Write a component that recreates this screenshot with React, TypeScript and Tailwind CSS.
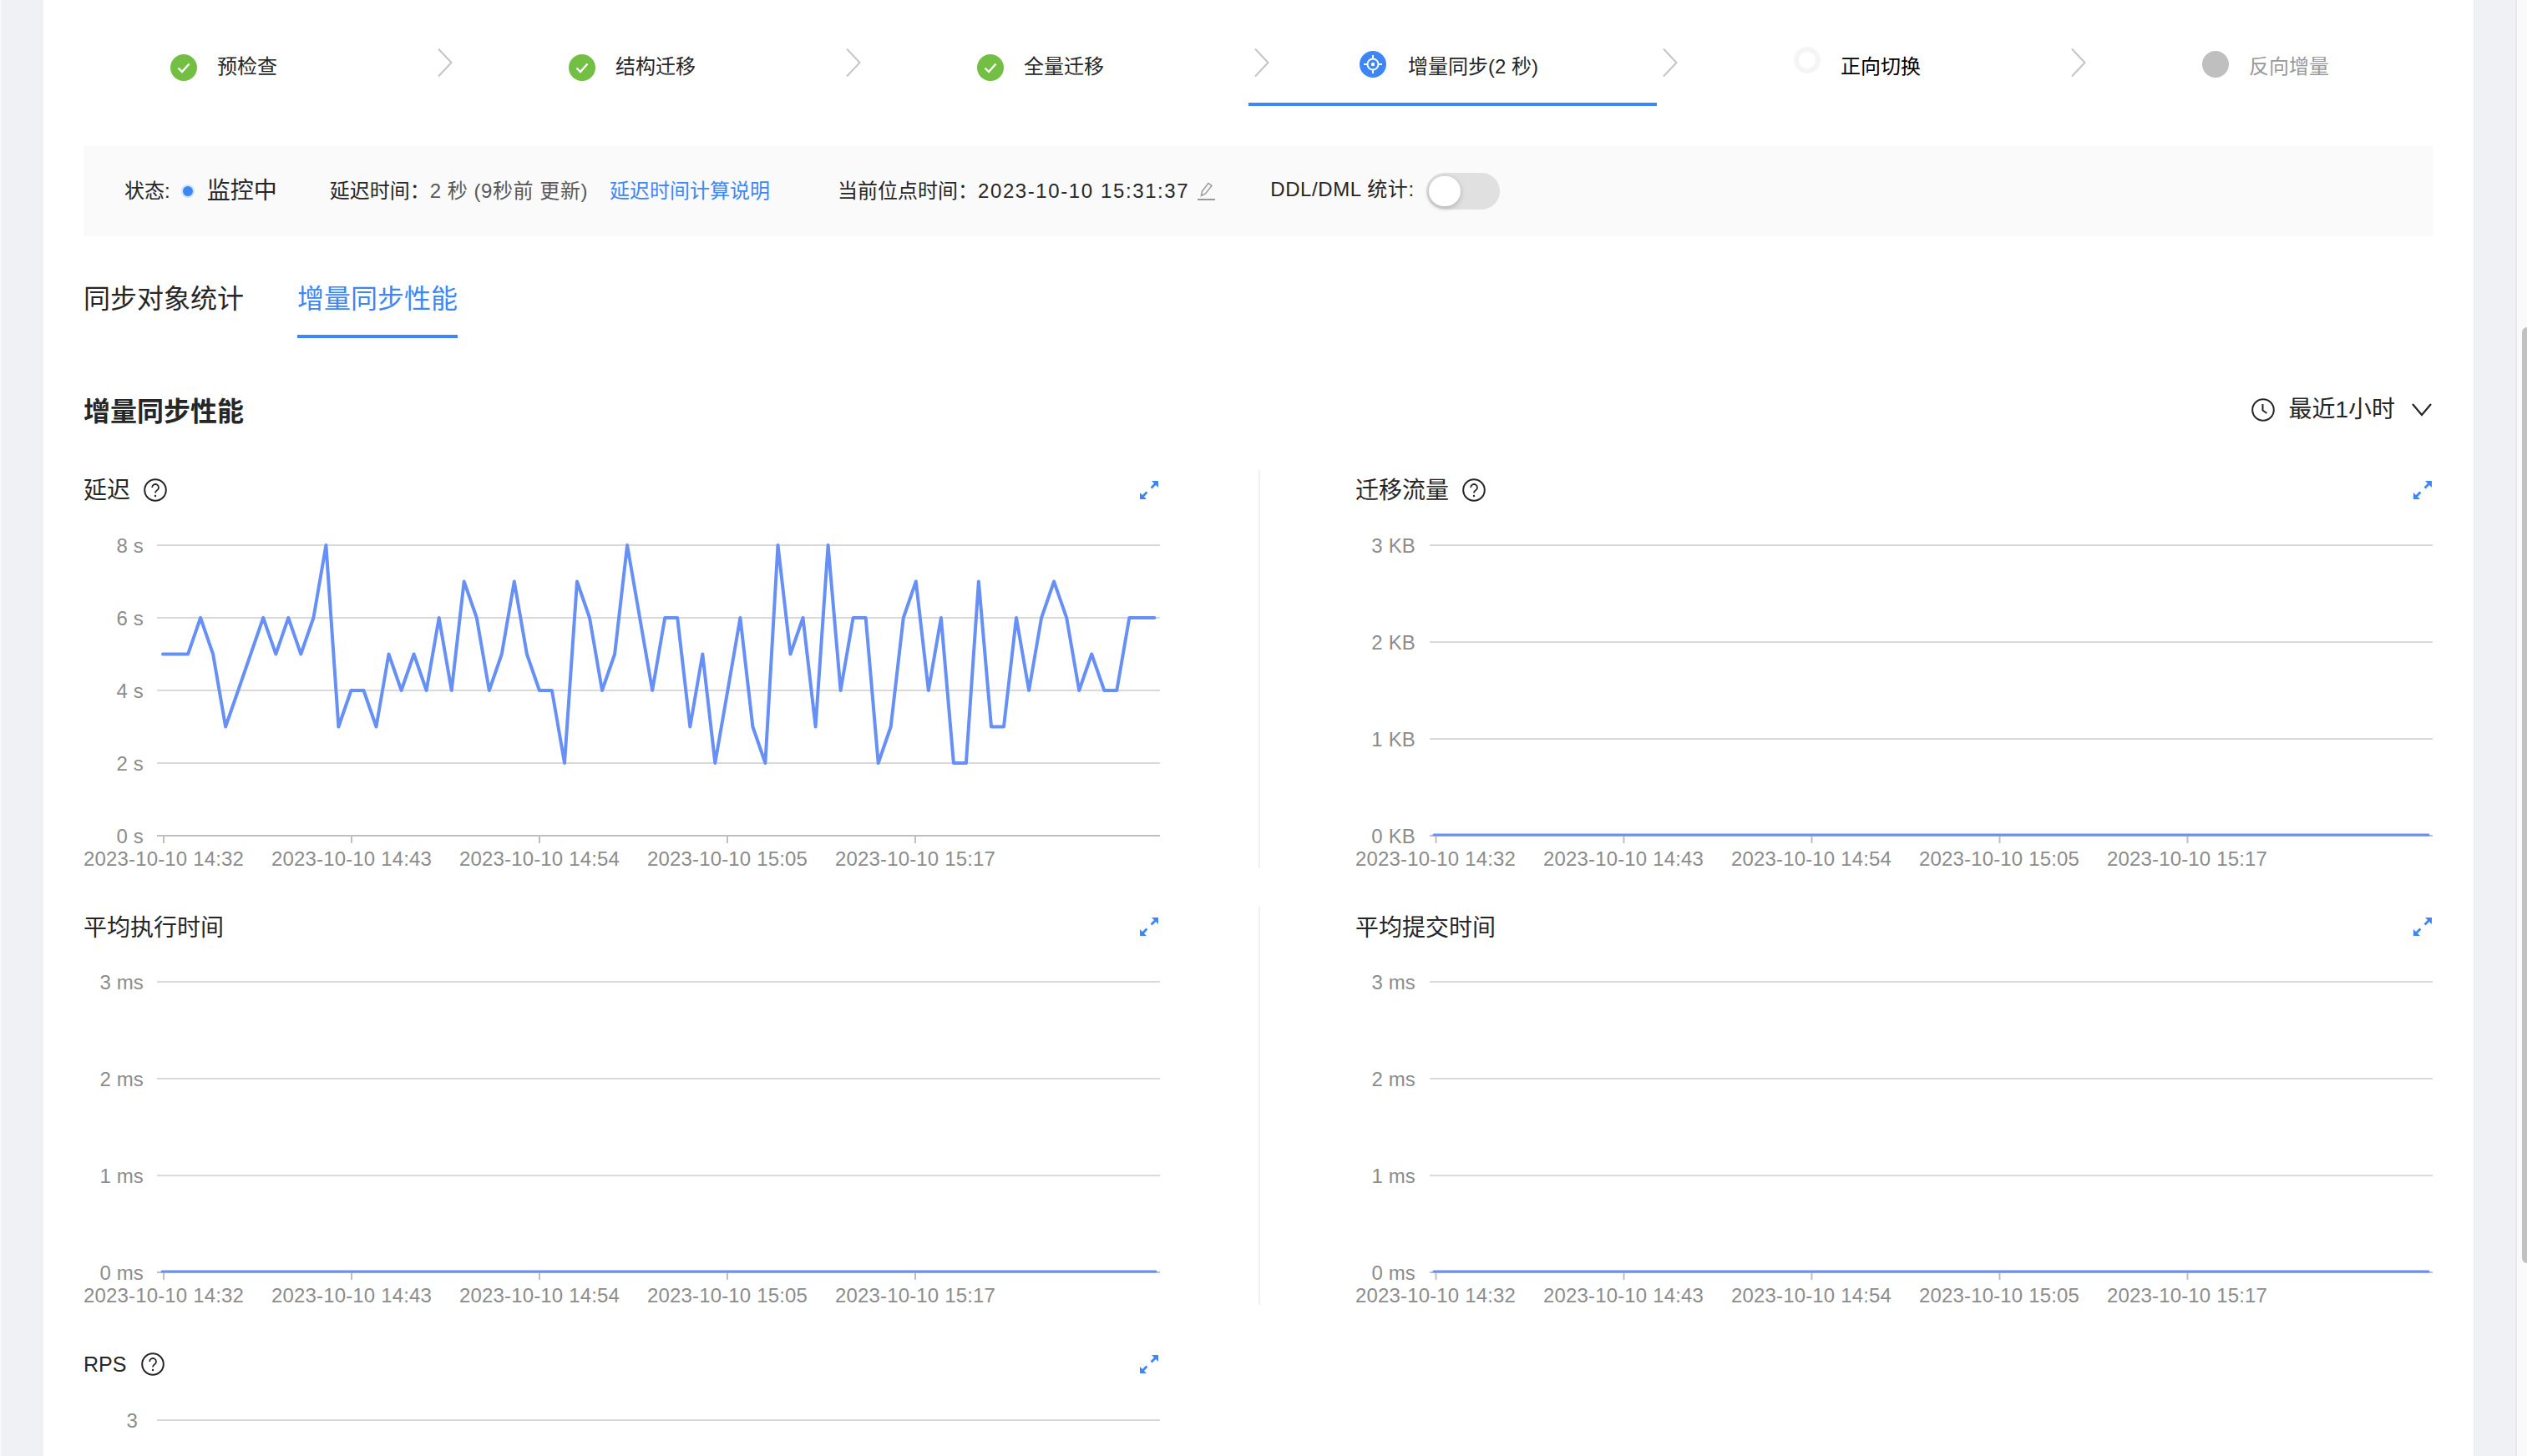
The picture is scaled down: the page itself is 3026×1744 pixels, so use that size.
import React from "react";

const BLUE = "#3d87f5";
const DATA = [5,5,5,6,5,3,4,5,6,5,6,5,6,8,3,4,4,3,5,4,5,4,6,4,7,6,4,5,7,5,4,4,2,7,6,4,5,8,6,4,6,6,3,5,2,4,6,3,2,8,5,6,3,8,4,6,6,2,3,6,7,4,6,2,2,7,3,3,6,4,6,7,6,4,5,4,4,6,6,6];
const TIMES = ["2023-10-10 14:32","2023-10-10 14:43","2023-10-10 14:54","2023-10-10 15:05","2023-10-10 15:17"];

function CheckIcon() {
  return (
    <svg width="32" height="32" viewBox="0 0 32 32" className="mt-[65px] shrink-0">
      <circle cx="16" cy="16" r="16" fill="#72bf44" />
      <path d="M9.5 16.5l4.5 4.5 8.5-9.5" fill="none" stroke="#fff" strokeWidth="2.4" />
    </svg>
  );
}

function TargetIcon() {
  return (
    <svg width="32" height="32" viewBox="0 0 32 32" className="mt-[61px] shrink-0">
      <circle cx="16" cy="16" r="16" fill={BLUE} />
      <circle cx="16" cy="16" r="6.5" fill="none" stroke="#fff" strokeWidth="2" />
      <circle cx="16" cy="16" r="2.2" fill="#fff" />
      <path d="M16 5v5M16 22v5M5 16h5M22 16h5" stroke="#fff" strokeWidth="2" />
    </svg>
  );
}

function Chevron() {
  return (
    <svg width="18" height="34" viewBox="0 0 18 34" className="absolute left-full top-[58px] ml-[7px]">
      <path d="M1 0.5L16.5 17 1 33.5" fill="none" stroke="#c4c4c4" strokeWidth="2" />
    </svg>
  );
}

function HelpIcon() {
  return (
    <svg width="28" height="28" viewBox="0 0 28 28" className="shrink-0">
      <circle cx="14" cy="14" r="12.8" fill="none" stroke="#262626" strokeWidth="2" />
      <path d="M10.2 11a3.9 3.9 0 1 1 5.9 3.3c-1.3.8-2.1 1.5-2.1 3.2" fill="none" stroke="#262626" strokeWidth="1.8" />
      <circle cx="14" cy="21" r="1.2" fill="#262626" />
    </svg>
  );
}

function ExpandIcon() {
  return (
    <svg width="22" height="22" viewBox="0 0 22 22">
      <path d="M22 0v8l-3-3-4.4 4.4-2-2L17 3l-3-3zM0 22v-8l3 3 4.4-4.4 2 2L5 19l3 3z" fill={BLUE} />
    </svg>
  );
}

type Step = { label: string; icon: React.ReactNode; active?: boolean; text: string };

const STEPS: Step[] = [
  { label: "预检查", icon: <CheckIcon />, text: "text-[#262626]" },
  { label: "结构迁移", icon: <CheckIcon />, text: "text-[#262626]" },
  { label: "全量迁移", icon: <CheckIcon />, text: "text-[#262626]" },
  { label: "增量同步(2 秒)", icon: <TargetIcon />, active: true, text: "text-[#262626]" },
  { label: "正向切换", icon: <div className="mt-[56px] h-[32px] w-[32px] shrink-0 rounded-full border-[6px] border-[#f5f5f5]" />, text: "text-black" },
  { label: "反向增量", icon: <div className="mt-[61px] h-[32px] w-[32px] shrink-0 rounded-full bg-[#bfbfbf]" />, text: "text-[#999999]" },
];

function Stepper() {
  return (
    <div className="ml-[-72px] flex w-[2934px]">
      {STEPS.map((s, i) => (
        <div
          key={s.label}
          className={`relative flex h-[127px] w-[489px] items-start justify-center pr-[9px] ${s.active ? "gap-[26px] border-b-4 border-[#3d87f5]" : "gap-[24px]"}`}
        >
          {s.icon}
          <span className={`mt-[62px] text-[24px] leading-[36px] ${s.text}`}>{s.label}</span>
          {i < STEPS.length - 1 && <Chevron />}
        </div>
      ))}
    </div>
  );
}

function StatusBar() {
  return (
    <div className="mt-[48px] flex h-[108px] items-center bg-[#fafafa] pl-[49px] text-[24px] text-[#262626]">
      <span>状态:</span>
      <span className="ml-[15px] h-[12px] w-[12px] rounded-full bg-[#3d87f5] ring-2 ring-[#cfe1fd]" />
      <span className="ml-[17px] text-[28px]">监控中</span>
      <span className="ml-[63px]">{"延迟时间\uFF1A"}</span>
      <span className="tracking-[0.55px] text-[#595959]">2 秒 (9秒前 更新)</span>
      <span className="ml-[26px] text-[#3d87f5]">延迟时间计算说明</span>
      <span className="ml-[81px]">{"当前位点时间\uFF1A"}</span>
      <span className="tracking-[1.6px]">2023-10-10 15:31:37</span>
      <svg width="21" height="22" viewBox="0 0 21 22" className="ml-[10px]">
        <path d="M4.5 16.5l1-5.5L13 1.5l4 3-7.5 9.5z" fill="none" stroke="#999" strokeWidth="1.5" />
        <path d="M0 21h21" stroke="#999" strokeWidth="2" />
      </svg>
      <span className="ml-[66px] mb-[4px] tracking-[0.6px]">DDL/DML 统计:</span>
      <div className="ml-[14px] flex h-[44px] w-[88px] items-center rounded-full bg-[#e0e0e0] px-[3px]">
        <div className="h-[36px] w-[38px] rounded-full bg-white shadow-[0_2px_6px_rgba(0,0,0,0.22)]" />
      </div>
    </div>
  );
}

function Tabs() {
  return (
    <div className="mt-[51px] flex gap-[64px] text-[32px] leading-[44px]">
      <div className="h-[71px] pt-[2px] text-[#262626]">同步对象统计</div>
      <div className="h-[71px] border-b-4 border-[#3d87f5] pt-[2px] text-[#3d87f5]">增量同步性能</div>
    </div>
  );
}

function Header() {
  return (
    <div className="mt-[66px] flex h-[44px] items-center justify-between">
      <h2 className="text-[32px] font-bold leading-[44px] text-[#262626]">增量同步性能</h2>
      <div className="mb-[5px] mr-[2px] flex items-center text-[28px] text-[#262626]">
        <svg width="28" height="28" viewBox="0 0 28 28">
          <circle cx="14" cy="14" r="12.8" fill="none" stroke="#262626" strokeWidth="2" />
          <path d="M13.5 7v7.5l5 3.5" fill="none" stroke="#262626" strokeWidth="2" />
        </svg>
        <span className="ml-[16px]">最近1小时</span>
        <svg width="24" height="16" viewBox="0 0 24 16" className="ml-[20px]">
          <path d="M1 1l11 13L23 1" fill="none" stroke="#262626" strokeWidth="2.2" />
        </svg>
      </div>
    </div>
  );
}

type ChartProps = {
  title: string;
  help?: boolean;
  labels: string[];
  data?: number[];
  shift?: number;
  right?: boolean;
};

function Chart({ title, help, labels, data, shift = 0, right }: ChartProps) {
  const top = 42;
  const axis = top + 348;
  const gap = 348 / (labels.length - 1);
  const x0 = 88 + shift;
  const x1 = 1289 + shift;
  const ticks = [96, 321, 546, 771, 996].map((t) => t + shift * 0.5);
  const pts = data
    ? data.map((v, i) => `${(95 + i * 15.03).toFixed(1)},${axis - v * 43.5}`).join(" ")
    : `94,${axis - 1} ${1284 + shift},${axis - 1}`;
  return (
    <div className={right ? "w-[1291px]" : "w-[1290px]"}>
      <ChartTitle title={title} help={help} right={right} titleClass={help ? "mt-[2px]" : "mt-[4px]"} />
      <svg width="1291" height="440" viewBox="0 0 1291 440" className="block tracking-[0.15px]" fontSize="24">
        {labels.map((l, i) => {
          const y = top + i * gap;
          return (
            <g key={l}>
              <line x1={x0} x2={x1} y1={y} y2={y} stroke={i === labels.length - 1 ? "#bfbfbf" : "#d9d9d9"} strokeWidth="2" />
              <text x={72} y={y + 8.5} textAnchor="end" fill="#8c8c8c">{l}</text>
            </g>
          );
        })}
        {ticks.map((t, i) => (
          <g key={t}>
            <line x1={t} x2={t} y1={axis} y2={axis + 9} stroke="#bfbfbf" strokeWidth="2" />
            <text x={t - (right ? 0.5 : 0)} y={axis + 36} textAnchor="middle" fill="#8c8c8c">{TIMES[i]}</text>
          </g>
        ))}
        <polyline
          points={pts}
          fill="none"
          stroke="#6690f5"
          strokeWidth={data ? 4 : 3}
          strokeLinejoin="round"
          strokeLinecap="round"
        />
      </svg>
    </div>
  );
}

function ChartTitle({ title, help, right, titleClass }: { title: string; help?: boolean; right?: boolean; titleClass: string }) {
  return (
    <div className={`flex h-[48px] items-center justify-between text-[28px] text-[#262626] ${right ? "pr-[2px]" : "pr-[3px]"}`}>
      <div className="flex items-center gap-[16px]">
        <span className={titleClass}>{title}</span>
        {help && <HelpIcon />}
      </div>
      <ExpandIcon />
    </div>
  );
}

function RpsChart() {
  return (
    <div className="w-[1290px] pt-[1px]">
      <ChartTitle title="RPS" help titleClass="mr-[2px] mt-[2px] text-[25px]" />
      <svg width="1291" height="70" viewBox="0 0 1291 70" className="block tracking-[0.15px]" fontSize="24">
        <line x1="88" x2="1289" y1="43" y2="43" stroke="#d9d9d9" strokeWidth="2" />
        <text x="65" y="51.5" textAnchor="end" fill="#8c8c8c">3</text>
      </svg>
    </div>
  );
}

const MS = ["3 ms", "2 ms", "1 ms", "0 ms"];
const KB = ["3 KB", "2 KB", "1 KB", "0 KB"];

function Charts() {
  return (
    <div className="mt-[48px] grid grid-cols-[1407px_1407px] auto-rows-[523px]">
      <div>
        <Chart title="延迟" help labels={["8 s", "6 s", "4 s", "2 s", "0 s"]} data={DATA} />
      </div>
      <div className="h-[477px] border-l-2 border-[#f0f0f0] pl-[114px]">
        <Chart title="迁移流量" help labels={KB} shift={1} right />
      </div>
      <div>
        <Chart title="平均执行时间" labels={MS} />
      </div>
      <div className="h-[477px] border-l-2 border-[#f0f0f0] pl-[114px]">
        <Chart title="平均提交时间" labels={MS} shift={1} right />
      </div>
      <div>
        <RpsChart />
      </div>
    </div>
  );
}

export default function App() {
  return (
    <div className="flex h-[1744px] w-[3026px] overflow-hidden bg-[#f0f1f5] font-[Liberation_Sans,Noto_Sans_CJK_SC,sans-serif]">
      <main className="h-full flex-1 border-l-2 border-[#f8f8f9] pl-[50px]">
        <div className="h-full w-[2910px] bg-white px-[48px]">
          <Stepper />
          <StatusBar />
          <Tabs />
          <Header />
          <Charts />
        </div>
      </main>
      <aside className="h-full w-[14px] border-l-2 border-[#e8e8ea] bg-[#fafafa] pt-[392px]">
        <div className="ml-[6px] h-[1121px] w-[6px] rounded-l-[6px] bg-[#c1c1c1]" />
      </aside>
    </div>
  );
}
